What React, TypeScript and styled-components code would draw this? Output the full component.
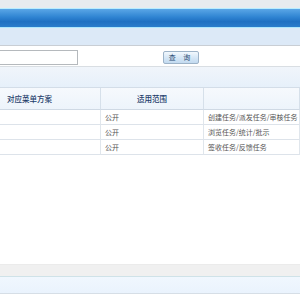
import React from 'react';
import styled, { createGlobalStyle } from 'styled-components';

const GlobalStyle = createGlobalStyle`
    html, body {
        margin: 0;
        padding: 0;
        background: #fff;
        overflow: hidden;
    }
    body {
        font-family: "Noto Sans CJK SC", "DejaVu Sans", sans-serif;
    }
`;

const Page = styled.div`
    display: flex;
    flex-direction: column;
    width: 300px;
    height: 300px;
    overflow: hidden;
`;

const TopStrip = styled.div`
    height: 8px;
    background: #e7ebef;
`;

const TitleBar = styled.div`
    height: 18px;
    border-top: 1px solid #b9ecff;
    border-bottom: 1px solid #aee6fb;
    background: linear-gradient(to bottom, #5aa6e6 0%, #2f84d2 45%, #1f70c2 70%, #2a7ccb 100%);
`;

const SubBar = styled.div`
    height: 17px;
    background: #dce9f7;
    border-bottom: 1px solid #c9ced4;
`;

const SearchRow = styled.div`
    display: flex;
    align-items: center;
    height: 20px;
    background: #fff;
    border-bottom: 1px solid #d9dee3;
`;

const SearchInput = styled.div`
    width: 78px;
    height: 13px;
    margin-left: -2px;
    margin-top: 3px;
    border: 1px solid #b5b9bd;
    background: #fff;
`;

const QueryButton = styled.div`
    display: flex;
    align-items: center;
    justify-content: center;
    width: 34px;
    height: 11px;
    margin-left: 85px;
    margin-top: 3px;
    border: 1px solid #9db3c8;
    border-radius: 2px;
    background: linear-gradient(to bottom, #f2f8fd 0%, #d4e6f6 55%, #c3daf0 100%);
    color: #2a4a72;
    font-size: 7px;
    letter-spacing: 3px;
    line-height: 1;
`;

const ToolBand = styled.div`
    height: 20px;
    background: linear-gradient(to bottom, #f0f5fb, #e6f0fa);
`;

const Table = styled.div`
    display: grid;
    grid-template-columns: 101px 103px 1fr;
    border-top: 1px solid #d3dde8;
`;

const HeadCell = styled.div<{ $align?: string }>`
    height: 21px;
    display: flex;
    align-items: center;
    justify-content: ${p => p.$align || 'flex-start'};
    padding-left: ${p => (p.$align ? '0' : '7px')};
    background: linear-gradient(to bottom, #f6f9fd, #edf4fb);
    border-right: 1px solid #d6e0ea;
    border-bottom: 1px solid #cfd9e4;
    color: #1e3d6b;
    font-size: 7.5px;
    font-weight: 500;
`;

const BodyCell = styled.div`
    height: 14px;
    display: flex;
    align-items: center;
    padding-left: 4px;
    background: #fff;
    border-right: 1px solid #e0e6ec;
    border-bottom: 1px solid #dde3ea;
    color: #555;
    font-size: 7px;
    white-space: nowrap;
    overflow: hidden;
`;

const Spacer = styled.div`
    flex: 1;
`;

const FooterGrey = styled.div`
    height: 11px;
    background: #f0f0f0;
    border-top: 1px solid #ebebeb;
`;

const FooterBlue = styled.div`
    height: 16px;
    border-top: 1px solid #cfe2e8;
    border-bottom: 1px solid #d6dee6;
    background: linear-gradient(to bottom, #f0f7fe, #eaf3fd);
    margin-bottom: 6px;
`;

const rows = [
    { scope: '公开', tasks: '创建任务/派发任务/审核任务' },
    { scope: '公开', tasks: '浏览任务/统计/批示' },
    { scope: '公开', tasks: '签收任务/反馈任务' },
];

const App: React.FC = () => {
    return (
        <Page>
            <GlobalStyle />
            <TopStrip />
            <TitleBar />
            <SubBar />
            <SearchRow>
                <SearchInput />
                <QueryButton>查 询</QueryButton>
            </SearchRow>
            <ToolBand />
            <Table>
                <HeadCell>对应菜单方案</HeadCell>
                <HeadCell $align='center'>适用范围</HeadCell>
                <HeadCell />
                {rows.map((row, index) => (
                    <React.Fragment key={index}>
                        <BodyCell />
                        <BodyCell>{row.scope}</BodyCell>
                        <BodyCell>{row.tasks}</BodyCell>
                    </React.Fragment>
                ))}
            </Table>
            <Spacer />
            <FooterGrey />
            <FooterBlue />
        </Page>
    );
};

export default App;
